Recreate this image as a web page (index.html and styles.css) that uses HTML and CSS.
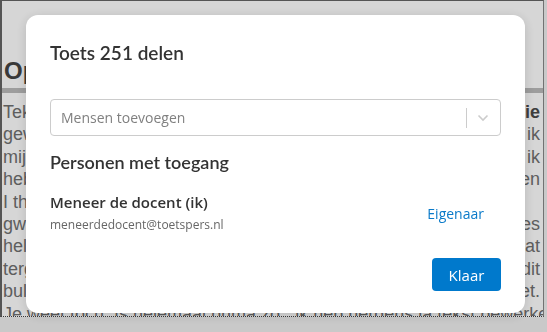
FILE: index.html
```html
<!DOCTYPE html>
<html lang="nl">
<head>
    <meta charset="UTF-8">
    <meta name="viewport" content="width=device-width, initial-scale=1.0">
    <title>Toets delen</title>
    <link rel="stylesheet" href="styles.css">
</head>
<body>
    <!-- pagina achter de dialoog -->
    <div class="page">
        <h1 class="page-title">Opdracht</h1>
        <div class="page-rule"></div>
        <div class="page-text">
            <div class="line">Tekst van de opdracht staat hier en is nog niet af, <b>zie</b></div>
            <div class="line">gewoon wat ik heb geschreven voor deze toets en wat ik</div>
            <div class="line">mijn leerlingen wil vragen om te lezen voordat ik</div>
            <div class="line">heb gevraagd of ze de tekst hebben gelezen, samen</div>
            <div class="line line-short">I think this is fine for now and will do</div>
            <div class="line">gwrite nog meer tekst om te kijken of alles</div>
            <div class="line">helemaal uitgelijnd staat en de tekst niet te lang is, dat</div>
            <div class="line">tergend langzaam alles op de goede plek komt, met dit</div>
            <div class="line">bullet punt dat we hier nog even neerzetten en neerzet.</div>
            <div class="line line-link">Je weet toch. Is helemaal prima zo , ik heb nergens ja tekst bewerken in</div>
        </div>
    </div>

    <!-- dialoog -->
    <div class="overlay">
        <div class="modal">
            <h2 class="modal-title">Toets 251 delen</h2>

            <div class="select">
                <span class="select-placeholder">Mensen toevoegen</span>
                <span class="select-sep"></span>
                <svg class="select-arrow" width="12" height="8" viewBox="0 0 12 8">
                    <path d="M1.5 1.5 L6 6 L10.5 1.5" fill="none" stroke="#cccccc" stroke-width="1.6"/>
                </svg>
            </div>

            <h3 class="section-title">Personen met toegang</h3>

            <div class="person">
                <div class="person-info">
                    <div class="person-name">Meneer de docent (ik)</div>
                    <div class="person-mail">meneerdedocent@toetspers.nl</div>
                </div>
                <div class="person-role">Eigenaar</div>
            </div>

            <div class="modal-footer">
                <button class="btn-primary">Klaar</button>
            </div>
        </div>
    </div>
</body>
</html>
```

FILE: styles.css
```css
body {
    margin: 0;
    background-color: #f0f0f0;
    font-family: 'Liberation Sans', Arial, sans-serif;
    overflow: hidden;
}

.page {
    height: 317px;
    width: 544px;
    background: white;
    border-top: 1px solid #666;
    border-left: 2px solid #666;
    border-right: 1px solid #888;
    border-bottom: 1px dotted #444;
    box-sizing: border-box;
    overflow: hidden;
    color: #707070;
}

.page-title {
    font-size: 24px;
    font-weight: bold;
    color: #444;
    margin: 0;
    padding: 56px 0 0 2px;
    line-height: 28px;
}

.page-rule {
    height: 5px;
    background: #bbb;
    margin-top: 3px;
}

.page-text {
    padding: 8px 3px 0 1px;
    font-size: 18px;
    line-height: 22.4px;
}

.line {
    white-space: nowrap;
    text-align: justify;
    text-align-last: justify;
}

.line-short {
    text-align-last: left;
}

.line b {
    color: #4a4a4a;
}

.line-link {
    text-align-last: left;
    text-decoration: underline dashed;
}

.overlay {
    position: fixed;
    inset: 0;
    background: rgba(0, 0, 0, 0.16);
    display: flex;
    justify-content: center;
    align-items: flex-start;
    padding: 15px 0 0 4px;
}

.modal {
    width: 499px;
    height: 298px;
    background: white;
    border-radius: 12px;
    box-shadow: 0 2px 12px rgba(0, 0, 0, 0.15);
    padding: 26px 24px 22px 24px;
    box-sizing: border-box;
    display: flex;
    flex-direction: column;
    font-family: 'Open Sans', sans-serif;
    color: #333;
}

.modal-title {
    font-family: 'Lato', sans-serif;
    font-size: 19px;
    font-weight: 600;
    margin: 0;
    line-height: 24px;
    color: #333;
}

.select {
    margin-top: 34px;
    height: 37px;
    border: 1px solid #ccc;
    border-radius: 4px;
    display: flex;
    align-items: center;
    box-sizing: border-box;
}

.select-placeholder {
    flex: 1;
    padding-left: 10px;
    font-size: 14px;
    color: #808080;
}

.select-sep {
    width: 1px;
    height: 20px;
    background: #ccc;
}

.select-arrow {
    margin: 0 11px 0 10px;
}

.section-title {
    font-family: 'Lato', sans-serif;
    font-size: 18px;
    font-weight: 600;
    margin: 15px 0 0 0;
    line-height: 22px;
    color: #333;
}

.person {
    display: flex;
    align-items: center;
    margin-top: 19px;
}

.person-info {
    flex: 1;
}

.person-name {
    font-size: 15px;
    font-weight: 600;
    line-height: 20px;
    color: #333;
}

.person-mail {
    font-size: 12px;
    color: #666;
    line-height: 18px;
    margin-top: 4px;
}

.person-role {
    font-size: 14px;
    color: #0a7ac9;
    margin-right: 17px;
}

.modal-footer {
    margin-top: auto;
    display: flex;
    justify-content: flex-end;
}

.btn-primary {
    width: 69px;
    height: 33px;
    background-color: #0079cc;
    color: white;
    border: none;
    border-radius: 4px;
    font-family: 'Open Sans', sans-serif;
    font-size: 15px;
    cursor: pointer;
}
```
